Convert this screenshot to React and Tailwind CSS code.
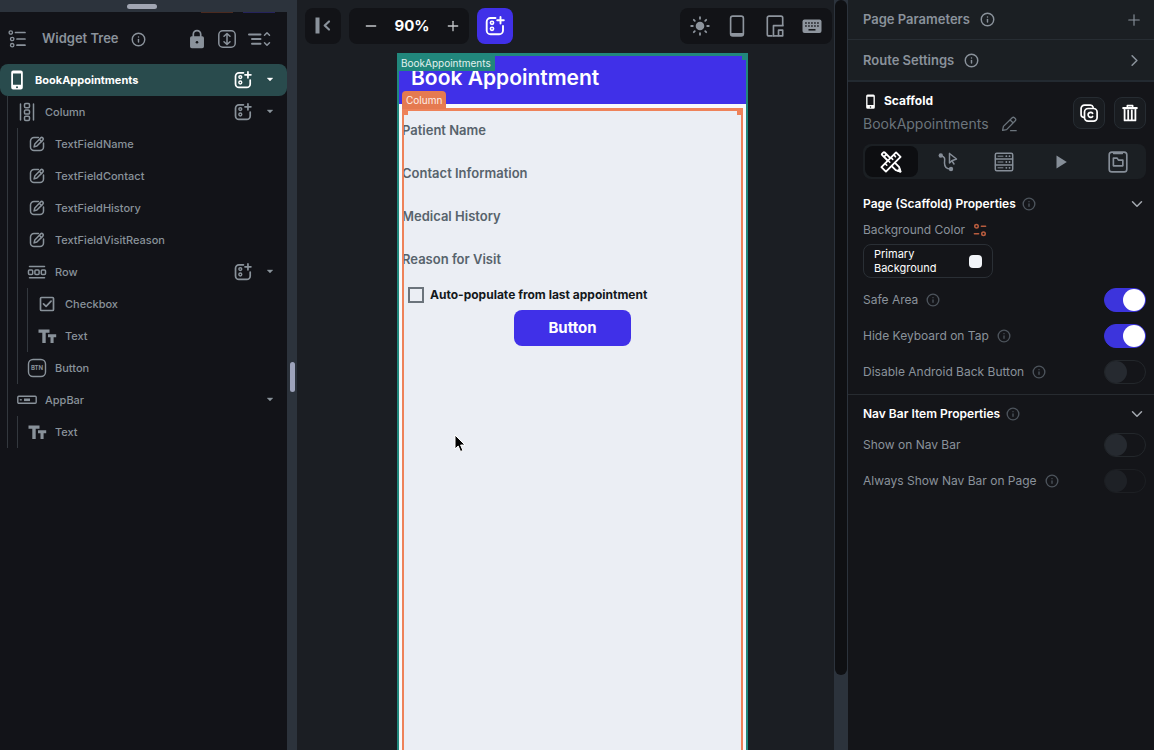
import React, { useState } from "react";
import { Info, Plus, Minus, ChevronRight, ChevronDown } from "lucide-react";

function Svg({ size = 20, className = "", children, ...rest }) {
  return (
    <svg
      width={size}
      height={size}
      viewBox="0 0 20 20"
      fill="none"
      stroke="currentColor"
      strokeWidth="1.5"
      strokeLinecap="round"
      strokeLinejoin="round"
      aria-hidden="true"
      className={"shrink-0 " + className}
      {...rest}
    >
      {children}
    </svg>
  );
}

const AddWidgetIcon = ({ size = 18 }) => (
  <Svg size={size} strokeWidth="1.9">
    <path d="M10.500 2H5.500A3.800 3.800 0 0 0 1.700 5.800v8.700a3.800 3.800 0 0 0 3.800 3.800h8.700a3.800 3.800 0 0 0 3.800-3.800V10" />
    <path d="M15.500 1v6.600M12.200 4.300h6.600" strokeWidth="1.900" />
    <circle cx="7" cy="6.800" r="1.600" strokeWidth="1.600" />
    <circle cx="7" cy="12.800" r="1.600" strokeWidth="1.600" />
  </Svg>
);

const CaretIcon = () => (
  <svg width="10" height="10" viewBox="0 0 10 10" fill="currentColor" aria-hidden="true" className="shrink-0">
    <path d="M2.200 3h5.600L5 6z" stroke="currentColor" strokeLinejoin="round" strokeWidth=".4" />
  </svg>
);

const PhoneIcon = ({ size = 20 }) => (
  <Svg size={size} strokeWidth="0" fill="currentColor">
    <path
      fillRule="evenodd"
      d="M6.200.500h7.600a2 2 0 0 1 2 2v15a2 2 0 0 1-2 2H6.200a2 2 0 0 1-2-2v-15a2 2 0 0 1 2-2zM6 3.500v11.300h8V3.500zM10 16.200a1 1 0 1 0 0 2 1 1 0 0 0 0-2z"
    />
  </Svg>
);

const ColumnIcon = () => (
  <Svg>
    <path d="M3.500 2v16M16.500 2v16" />
    <rect x="7.500" y="1.500" width="5" height="4.200" rx="1.200" />
    <rect x="7.500" y="7.900" width="5" height="4.200" rx="1.200" />
    <rect x="7.500" y="14.300" width="5" height="4.200" rx="1.200" />
  </Svg>
);

const RowIcon = () => (
  <Svg>
    <path d="M2.500 4.500h15M2.500 15.800h15" />
    <rect x="1.500" y="8" width="4.200" height="4.400" rx="1" />
    <rect x="7.900" y="8" width="4.200" height="4.400" rx="1" />
    <rect x="14.300" y="8" width="4.200" height="4.400" rx="1" />
  </Svg>
);

const EditIcon = () => (
  <Svg strokeWidth="1.500">
    <path d="M11.500 3.500H7A3.500 3.500 0 0 0 3.500 7v6A3.500 3.500 0 0 0 7 16.500h6a3.500 3.500 0 0 0 3.500-3.500V9" />
    <path d="M13.600 3.900a1.500 1.500 0 0 1 2.200 2.200l-5.900 5.900-2.800.900.700-3z" />
    <path d="M12.500 5.500l2 2" />
  </Svg>
);

const CheckboxIcon = () => (
  <Svg strokeWidth="1.700">
    <rect x="3.500" y="3.500" width="13" height="13" rx="1" />
    <path d="M6.500 9.800l2.600 2.600 5-5.200" />
  </Svg>
);

const TextIcon = () => (
  <Svg stroke="none" fill="currentColor">
    <path d="M1.500 3.500h11v3.200H8.700V17H5.300V6.700H1.500zM11 8.300h8.200v2.900h-2.600V17h-3.100v-5.800H11z" />
  </Svg>
);

const ButtonIcon = () => (
  <Svg strokeWidth="1.400">
    <rect x="1.500" y="1.500" width="17" height="17" rx="4.500" />
    <text x="10" y="12.200" textAnchor="middle" fontSize="6" fontWeight="700" fontFamily="Inter, sans-serif" fill="currentColor" stroke="none">
      BTN
    </text>
  </Svg>
);

const AppBarIcon = () => (
  <Svg strokeWidth="1.400">
    <rect x=".8" y="6.300" width="18.400" height="7" rx="1" />
    <path d="M2.800 9.800h2" strokeWidth="1.400" strokeLinecap="butt" />
    <path d="M7 9.800h6" strokeWidth="2.600" strokeLinecap="butt" />
  </Svg>
);

const ListIcon = () => (
  <Svg>
    <circle cx="2.800" cy="3.500" r="1.700" strokeWidth="1.300" />
    <circle cx="4.200" cy="10" r="1.700" strokeWidth="1.300" />
    <circle cx="4.200" cy="16.200" r="1.700" strokeWidth="1.300" />
    <path d="M7.500 3.500H17M9 10h8M9 16.200h8" strokeWidth="1.700" />
  </Svg>
);

const LockIcon = () => (
  <Svg>
    <rect x="3.800" y="8" width="12.400" height="10.500" rx="1" fill="currentColor" />
    <path d="M6.300 8V5.300a3.700 3.700 0 0 1 7.400 0V8" strokeWidth="1.700" />
    <circle cx="10" cy="13.200" r="1.300" fill="#14161a" stroke="none" />
  </Svg>
);

const ExpandIcon = () => (
  <Svg>
    <rect x="1.800" y="1.800" width="16.400" height="16.400" rx="4" />
    <path d="M10 4.800v10.400M7 7.300l3-2.800 3 2.800M7 12.700l3 2.800 3-2.800" />
  </Svg>
);

const CollapseIcon = () => (
  <svg width="24" height="20" viewBox="0 0 24 20" fill="none" stroke="currentColor" strokeWidth="2" strokeLinecap="round" strokeLinejoin="round" aria-hidden="true">
    <path d="M2 5.500h11.500M5 10h8.500M5 14.800h8.500" />
    <path d="M17.500 6.300l2.500-2.500 2.500 2.500M17.500 13.700l2.500 2.500 2.500-2.500" strokeWidth="1.500" />
  </svg>
);

function InfoIcon({ dim = false, size = 15 }) {
  return <Info size={size} strokeWidth={2.3} aria-hidden="true" className={dim ? "shrink-0 text-[#4d545c]" : "shrink-0 text-[#8a929b]"} />;
}

const TREE = {
  name: "BookAppointments",
  icon: PhoneIcon,
  add: true,
  selected: true,
  children: [
    {
      name: "Column",
      icon: ColumnIcon,
      add: true,
      children: [
        { name: "TextFieldName", icon: EditIcon },
        { name: "TextFieldContact", icon: EditIcon },
        { name: "TextFieldHistory", icon: EditIcon },
        { name: "TextFieldVisitReason", icon: EditIcon },
        {
          name: "Row",
          icon: RowIcon,
          add: true,
          children: [
            { name: "Checkbox", icon: CheckboxIcon },
            { name: "Text", icon: TextIcon },
          ],
        },
        { name: "Button", icon: ButtonIcon },
      ],
    },
    { name: "AppBar", icon: AppBarIcon, children: [{ name: "Text", icon: TextIcon }] },
  ],
};

function TreeNode({ node }) {
  const Icon = node.icon;
  return (
    <li>
      <div
        className={
          "flex h-8 items-center gap-2 pl-[7px] pr-3 text-[11px] " +
          (node.selected ? "rounded-lg bg-[#294b4d] font-bold text-white" : "font-medium text-[#89929a]")
        }
      >
        <Icon />
        <span className="flex-1 truncate">{node.name}</span>
        {node.add && (
          <button type="button" aria-label={"Add widget to " + node.name}>
            <AddWidgetIcon />
          </button>
        )}
        {node.children && (
          <button type="button" aria-label={"Collapse " + node.name} className="ml-[5px]">
            <CaretIcon />
          </button>
        )}
      </div>
      {node.children && (
        <ul className="ml-[7px] border-l border-[#33383e] pl-0.5">
          {node.children.map((child) => (
            <TreeNode key={child.name} node={child} />
          ))}
        </ul>
      )}
    </li>
  );
}

function WidgetTree() {
  return (
    <aside className="flex w-[287px] shrink-0 flex-col bg-[#121318]">
      <div className="flex h-3 shrink-0 items-center justify-center bg-[#2c333c] pr-1">
        <div className="h-[5px] w-[30px] rounded-full bg-[#a0a5b2]" />
      </div>
      <div className="flex h-px justify-end gap-2.5 pr-3">
        <div className="w-8 bg-[#4b2a1f]" />
        <div className="w-8 bg-[#25235c]" />
      </div>
      <header className="flex h-[51px] shrink-0 items-center pl-2 pr-4 pt-px text-[#8a929b]">
        <ListIcon />
        <h2 className="ml-3.5 text-[13px] font-semibold">Widget Tree</h2>
        <span className="ml-3">
          <InfoIcon />
        </span>
        <div className="ml-auto flex items-center gap-2.5">
          <button type="button" aria-label="Lock"><LockIcon /></button>
          <button type="button" aria-label="Expand"><ExpandIcon /></button>
          <button type="button" aria-label="Collapse all"><CollapseIcon /></button>
        </div>
      </header>
      <ul>
        <TreeNode node={TREE} />
      </ul>
    </aside>
  );
}

function Toolbar() {
  return (
    <div className="flex items-center gap-2 pl-2 pr-0.5 pt-2">
      <button type="button" aria-label="Collapse panel" className="flex size-9 items-center justify-center rounded-lg bg-[#121317] text-[#8a929b]">
        <Svg>
          <path d="M4.500 1.500v16" strokeWidth="4" strokeLinecap="butt" />
          <path d="M16 5.500l-4.300 4 4.300 4" strokeWidth="2.200" />
        </Svg>
      </button>
      <div className="flex h-9 w-[120px] items-center justify-between rounded-lg bg-[#121317] pl-3.5 pr-2 text-[#c3c6ca]">
        <button type="button" aria-label="Zoom out"><Minus size={16} /></button>
        <span className="text-[15px] font-bold text-white">90%</span>
        <button type="button" aria-label="Zoom in"><Plus size={16} /></button>
      </div>
      <button type="button" aria-label="Add widget" className="flex size-9 items-center justify-center rounded-lg bg-[#4030e8] text-white">
        <AddWidgetIcon size={20} />
      </button>
      <div className="ml-auto flex h-9 w-[152px] items-center justify-between rounded-lg bg-[#121317] px-2.5 text-[#8e959e]">
        <button type="button" aria-label="Light mode">
          <Svg strokeWidth="1.800">
            <circle cx="10" cy="10" r="4.300" fill="currentColor" stroke="none" />
            <path d="M10 1.200v1.600M10 17.200v1.600M1.200 10h1.600M17.200 10h1.600M3.800 3.800l1 1M15.200 15.200l1 1M3.800 16.200l1-1M15.200 4.800l1-1" />
          </Svg>
        </button>
        <button type="button" aria-label="Phone size">
          <Svg size={22}>
            <rect x="4.200" y="1" width="11.600" height="18" rx="2" />
            <path d="M5 17.500h10" strokeWidth="2.200" />
          </Svg>
        </button>
        <button type="button" aria-label="Device sizes">
          <Svg size={22} strokeWidth="1.500" strokeLinecap="butt">
            <path d="M7.800 19H4.600A1.600 1.600 0 0 1 3 17.400V2.600A1.600 1.600 0 0 1 4.600 1h10.800A1.600 1.600 0 0 1 17 2.600V9.700" />
            <path d="M8.600 19.800V9.700H17.800" />
            <path d="M17 19h-3.800v-5.200H17z" />
            <path d="M8.600 19h4.600" />
          </Svg>
        </button>
        <button type="button" aria-label="Keyboard">
          <Svg stroke="none">
            <rect x=".5" y="3.500" width="19" height="13.500" rx="2" fill="currentColor" />
            <path d="M3.200 7h13.600M3.200 10h13.600" stroke="#121317" strokeWidth="1.500" strokeDasharray="1.500 1.500" strokeLinecap="butt" />
            <path d="M6.500 13.800h7" stroke="#121317" strokeWidth="1.500" strokeLinecap="butt" />
          </Svg>
        </button>
      </div>
    </div>
  );
}

const FIELDS = ["Patient Name", "Contact Information", "Medical History", "Reason for Visit"];

function PhonePreview() {
  return (
    <div className="relative flex min-h-0 w-[351px] flex-1 flex-col border-x-2 border-t-3 border-[#21877c] bg-[#f7f9fb]">
      <div className="flex h-12 shrink-0 items-center bg-[#4030e8] pl-3">
        <h1 className="pb-1 text-[21px] font-semibold leading-7 text-white">Book Appointment</h1>
      </div>
      <span className="absolute left-0 top-0 flex h-[15px] items-center bg-[#21877c] pl-0.5 pr-1 text-[10px] text-[#e3f1ef]">BookAppointments</span>
      <span className="absolute right-0 top-0 size-1 bg-[#21877c]" />

      <div className="relative mx-[3px] mt-1 flex flex-1 flex-col bg-[#ebeef4]">
        {FIELDS.map((field) => (
          <input
            key={field}
            type="text"
            aria-label={field}
            placeholder={field}
            className="h-[43px] w-full bg-transparent text-[13px] font-semibold text-[#57636c] outline-none placeholder:text-[#57636c]"
          />
        ))}
        <label className="flex h-[30px] items-center gap-1.5 pl-1.5 text-xs font-bold text-[#14181b]">
          <input type="checkbox" className="size-4 appearance-none border-2 border-[#6b737b] checked:bg-[#4030e8]" />
          Auto-populate from last appointment
        </label>
        <button type="button" className="h-9 w-[117px] self-center rounded-lg bg-[#4030e8] text-[15px] font-bold text-white">
          Button
        </button>

        <div className="pointer-events-none absolute inset-0 border-x-2 border-t-3 border-[#ee8259]">
          <span className="absolute left-0 top-0 h-1 w-1 bg-[#ee8259]" />
          <span className="absolute right-0 top-0 h-1 w-1 bg-[#ee8259]" />
        </div>
        <span className="absolute -top-[17px] left-0 flex h-[18px] items-center rounded-t-sm bg-[#e57a50] px-1 text-[10px] text-[#fdeee8]">Column</span>
        <svg width="12" height="20" viewBox="0 0 12 20" aria-hidden="true" className="absolute left-[52px] top-[326px]">
          <path d="M1 1v14l3.200-3 2.300 5.500 2.400-1L6.600 11H11z" fill="#000" stroke="#fff" strokeWidth="1" />
        </svg>
      </div>
    </div>
  );
}

function Toggle({ id, defaultOn = false, faded = false }) {
  const [on, setOn] = useState(defaultOn);
  return (
    <input
      id={id}
      type="checkbox"
      role="switch"
      checked={on}
      onChange={(e) => setOn(e.target.checked)}
      className={
        "relative h-6 w-[42px] shrink-0 appearance-none rounded-full border border-[#23272b] before:block before:size-[22px] before:rounded-full before:bg-[#262a30] checked:border-[#3c34dc] checked:bg-[#3c34dc] checked:before:ml-auto checked:before:bg-white " +
        (faded ? "opacity-60" : "")
      }
    />
  );
}

function SettingRow({ id, label, info = true, on, faded }) {
  return (
    <div className="flex h-9 items-center gap-2 pl-[15px] pr-2">
      <label htmlFor={id} className="text-xs text-[#8a929b]">{label}</label>
      {info && <InfoIcon dim size={14} />}
      <span className="ml-auto flex">
        <Toggle id={id} defaultOn={on} faded={faded} />
      </span>
    </div>
  );
}

function SectionHeading({ children }) {
  return (
    <div className="flex h-6 items-center gap-1.5 pl-[15px] pr-2">
      <h3 className="text-xs font-semibold text-white">{children}</h3>
      <InfoIcon dim size={14} />
      <button type="button" aria-label="Toggle section" className="ml-auto text-[#a4a9b0]">
        <ChevronDown size={18} />
      </button>
    </div>
  );
}

const TABS = [
  {
    name: "Properties",
    icon: (
      <Svg size={22} strokeWidth="1.700">
        <path d="M14.600 1.300l4.100 4.100L5.400 18.700l-4.100-4.100z" />
        <path d="M12.500 3.500l1.600 1.600M10 6l1.600 1.600M7.300 8.700l1.600 1.600M4.600 11.400l1.600 1.600" strokeWidth="1.400" />
        <path d="M6.500 8.200L2 3.700a1 1 0 0 1 0-1.400L2.900 1.400a1 1 0 0 1 1.400 0L8.700 5.800M4.500 4.500l1-1" />
        <path d="M14.300 11.400l3 3 1.300 4.300-4.300-1.300-3-3" />
        <path d="M18.600 18.700l-2.200-.7 1.500-1.500z" fill="currentColor" />
      </Svg>
    ),
  },
  {
    name: "Actions",
    icon: (
      <Svg>
        <circle cx="2.800" cy="3.500" r="2.200" fill="currentColor" stroke="none" />
        <circle cx="13" cy="17" r="2.200" fill="currentColor" stroke="none" />
        <path d="M3 4c5 .500 3.500 4 3.500 7 0 4 1.500 6 6 6" />
        <path d="M11.500 1.500v9.500l2.300-2.300 2.200 3.300M11.500 1.500l7 5.500-4.700 1.700" />
      </Svg>
    ),
  },
  {
    name: "Backend",
    icon: (
      <Svg strokeWidth="1.500">
        <rect x="1.300" y="1.300" width="17.400" height="17.400" rx="1.500" />
        <path d="M1.500 7h17M1.500 12.900h17" />
        <path d="M4 4.200h5M4 10h5M4 15.800h5" strokeWidth="1" />
        <path d="M12.300 4.200h.1M15.500 4.200h.1M12.300 10h.1M15.500 10h.1M12.300 15.800h.1M15.500 15.800h.1" strokeWidth="1.800" />
      </Svg>
    ),
  },
  {
    name: "Animations",
    icon: (
      <Svg stroke="none" fill="currentColor">
        <path d="M5.500 3.500v13L15.800 10z" />
      </Svg>
    ),
  },
  {
    name: "Documentation",
    icon: (
      <Svg size={22} strokeWidth="1.500">
        <rect x="2" y="1" width="16" height="18" rx="2.500" />
        <path d="M5.800 6.500h3.400l1.200 1.800h4v5.200H5.800z" />
        <path d="M6 2.300h8" strokeWidth="1.400" />
      </Svg>
    ),
  },
];

function PropertiesPanel() {
  return (
    <aside className="w-[306px] shrink-0 overflow-hidden bg-[#141519]">
      <div className="flex h-10 items-center gap-2.5 border-b border-[#272d33] bg-[#1b1f23] pl-[15px] pr-[11px] text-[13px] font-semibold text-[#8a929b]">
        Page Parameters
        <InfoIcon />
        <button type="button" aria-label="Add parameter" className="ml-auto"><Plus size={18} strokeWidth={1.5} /></button>
      </div>
      <div className="flex h-[42px] items-center gap-2.5 border-b-2 border-[#232a31] bg-[#1b1f23] pl-[15px] pr-2.5 pt-px text-[13px] font-semibold text-[#8a929b]">
        Route Settings
        <InfoIcon />
        <button type="button" aria-label="Open route settings" className="ml-auto"><ChevronRight size={19} /></button>
      </div>

      <div className="flex items-center gap-[9px] pb-2 pl-[15px] pr-2 pt-2">
        <div className="flex-1">
          <h2 className="flex items-center gap-1.5 text-xs font-bold leading-[22px] text-white">
            <PhoneIcon size={15} />
            Scaffold
          </h2>
          <div className="flex items-center gap-3 pb-px text-sm leading-[23px] text-[#6b747c]">
            BookAppointments
            <button type="button" aria-label="Rename">
              <Svg size={16} strokeWidth="1.600">
                <path d="M2 18l1-5L14 2.200a2 2 0 0 1 2.800 0l1 1a2 2 0 0 1 0 2.800L7 17zM11.500 5l3.500 3.500M12 18.300h7" />
              </Svg>
            </button>
          </div>
        </div>
        <button type="button" aria-label="Copy" className="flex size-8 items-center justify-center rounded-lg border border-[#262c32] bg-[#191c20] text-white">
          <Svg size={18} strokeWidth="1.900">
            <path d="M4 14.800A3.200 3.200 0 0 1 1.200 11.600V5a3.800 3.800 0 0 1 3.800-3.800h6.500A3.200 3.200 0 0 1 14.600 3.500" />
            <rect x="5" y="5" width="14" height="14" rx="4" />
            <path d="M14 10.300a2.800 2.800 0 1 0 0 3.500" />
          </Svg>
        </button>
        <button type="button" aria-label="Delete" className="flex size-8 items-center justify-center rounded-lg border border-[#262c32] bg-[#191c20] text-white">
          <Svg size={18} strokeWidth="1.700">
            <path d="M2.500 4.500h15" strokeWidth="2.400" />
            <path d="M7 4V1.800h6V4" />
            <path d="M4 6.500v11.700h12V6.500M8 7v10M12 7v10" strokeWidth="2" />
          </Svg>
        </button>
      </div>

      <div role="tablist" className="ml-[15px] mr-2 grid h-[35px] grid-cols-5 rounded-lg bg-[#1b1f23] text-[#868e98]">
        {TABS.map((tab, i) => (
          <button
            key={tab.name}
            type="button"
            role="tab"
            aria-selected={i === 0}
            aria-label={tab.name}
            className={"m-0.5 flex items-center justify-center rounded-lg " + (i === 0 ? "bg-[#0d0e11] text-white" : "")}
          >
            {tab.icon}
          </button>
        ))}
      </div>

      <section className="border-b border-[#272b30] pb-1 pt-[13px]">
        <SectionHeading>Page (Scaffold) Properties</SectionHeading>
        <div className="flex h-7 items-center gap-2 pl-[15px] text-xs text-[#8a929b]">
          Background Color
          <Svg size={14} className="text-[#b85c3e]" strokeWidth="2.200">
            <circle cx="5" cy="4.500" r="2.500" />
            <path d="M12 4.500h6M2 15.500h6" />
            <circle cx="15" cy="15.500" r="2.500" />
          </Svg>
        </div>
        <button type="button" className="mb-1 ml-[15px] flex h-[34px] w-[130px] items-center justify-between rounded-lg border border-[#2a2f35] pl-2.5 pr-2.5 text-left text-[11px] leading-[14px] text-white">
          <span>Primary<br />Background</span>
          <span className="size-[13px] rounded-sm bg-[#f1f4f8]" />
        </button>
        <SettingRow id="safe-area" label="Safe Area" on />
        <SettingRow id="hide-keyboard" label="Hide Keyboard on Tap" on />
        <SettingRow id="disable-back" label="Disable Android Back Button" />
      </section>
      <section className="pt-[7px]">
        <SectionHeading>Nav Bar Item Properties</SectionHeading>
        <div className="pt-px">
          <SettingRow id="show-nav" label="Show on Nav Bar" info={false} />
          <SettingRow id="always-show-nav" label="Always Show Nav Bar on Page" faded />
        </div>
      </section>
    </aside>
  );
}

export default function App() {
  return (
    <div className="flex h-screen overflow-hidden bg-[#1b1e23] font-['Inter',sans-serif]">
      <WidgetTree />
      <div className="flex w-2.5 shrink-0 items-center justify-center bg-[#2c333c] pt-1">
        <div className="h-[30px] w-[5px] rounded-full bg-[#9da3bb]" />
      </div>
      <main className="flex min-w-0 flex-1 flex-col gap-[9px]">
        <Toolbar />
        <div className="flex min-h-0 flex-1 justify-center pl-3.5">
          <div className="flex flex-col">
            <PhonePreview />
          </div>
        </div>
      </main>
      <div className="w-3.5 shrink-0 bg-[#2c333c] px-px">
        <div className="h-[90%] rounded-full bg-[#0f1013]" />
      </div>
      <PropertiesPanel />
    </div>
  );
}
